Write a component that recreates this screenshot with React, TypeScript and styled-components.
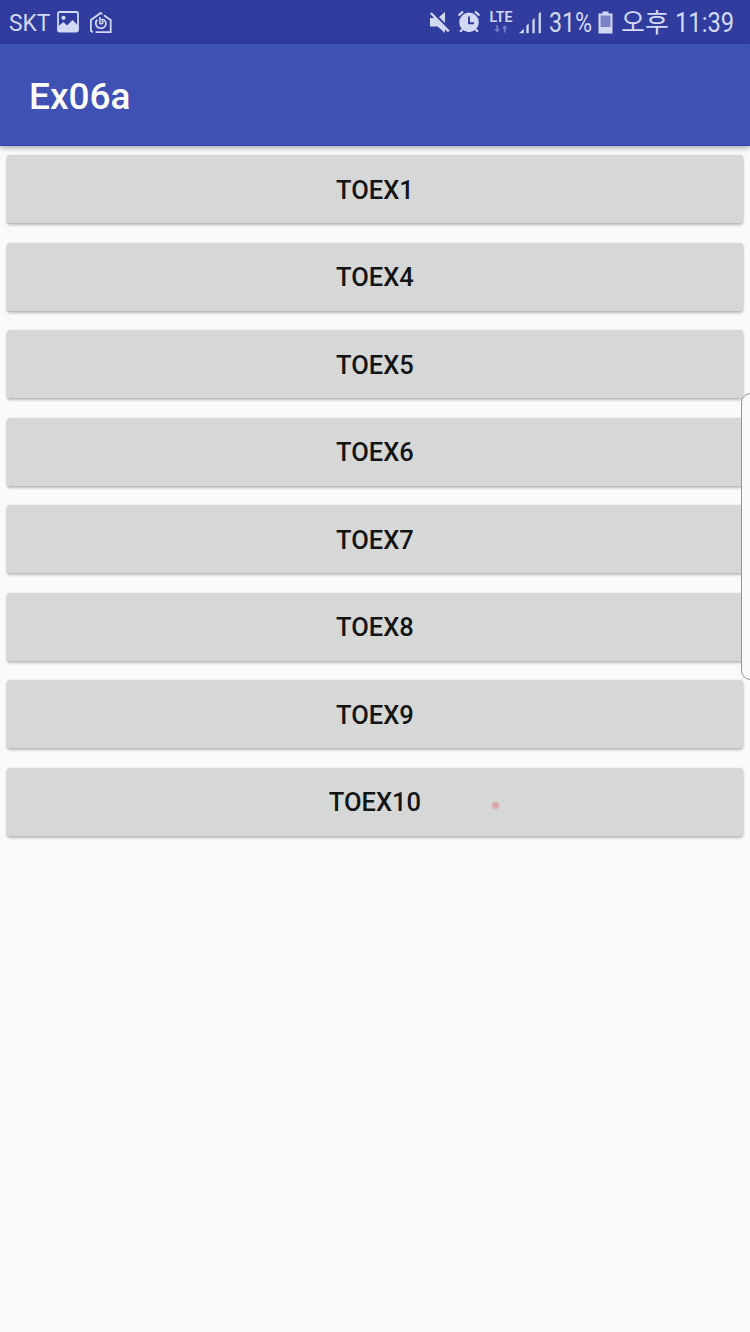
import React from 'react';
import styled, { createGlobalStyle } from 'styled-components';

const GlobalStyle = createGlobalStyle`
  * { box-sizing: border-box; }
  body {
    margin: 0;
    background: #fafafa;
    font-family: Roboto, "Noto Sans CJK KR", sans-serif;
  }
`;

const Screen = styled.div`
  position: relative;
  display: flex;
  flex-direction: column;
  width: 750px;
  height: 1332px;
  overflow: hidden;
  background: #fafafa;
`;

const StatusBar = styled.header`
  display: flex;
  justify-content: space-between;
  height: 44px;
  padding: 0 15px 0 9px;
  background: #303d9e;
  color: #d3d8f5;
`;

const StatusGroup = styled.div`
  display: flex;
  align-items: center;
  height: 44px;
`;

const Slot = styled.div<{ $w: number; $gap?: number }>`
  display: flex;
  flex: none;
  width: ${(p) => p.$w}px;
  margin-left: ${(p) => p.$gap ?? 0}px;

  svg { display: block; }
`;

const StatusText = styled.span<{ $scale?: number; $size?: number; $weight?: number }>`
  font-size: ${(p) => p.$size ?? 27}px;
  font-weight: ${(p) => p.$weight ?? 400};
  line-height: 44px;
  padding-top: 2px;
  white-space: nowrap;
  transform: scaleX(${(p) => p.$scale ?? 1});
  transform-origin: left center;
`;

const AppBar = styled.div`
  position: relative;
  display: flex;
  align-items: center;
  flex: none;
  height: 102px;
  padding: 4px 29px 0;
  background: #3f51b5;
  border-bottom: 1px solid #3444a2;
  box-shadow: 0 2px 5px rgba(0, 0, 0, 0.32);
`;

const Title = styled.h1`
  margin: 0;
  color: #fff;
  font-size: 37px;
  font-weight: 500;
  line-height: 44px;
`;

const ButtonList = styled.main`
  display: flex;
  flex-direction: column;
  gap: 19.5px;
  padding: 9px 7px 0;
`;

const RaisedButton = styled.button`
  height: 68px;
  padding: 1px 0 0;
  border: 0;
  border-radius: 3px;
  background: #d6d8d7;
  box-shadow: 0 2px 3px rgba(0, 0, 0, 0.26), 0 0 2px rgba(0, 0, 0, 0.12);
  color: #131514;
  font-family: inherit;
  font-size: 25.5px;
  font-weight: 500;
  line-height: 30px;
`;

const EdgeHandle = styled.div`
  position: absolute;
  top: 393px;
  right: -10px;
  width: 19px;
  height: 287px;
  border: 1px solid #929493;
  border-radius: 11px;
  background: #fafafa;
`;

const TouchDot = styled.div`
  position: absolute;
  top: 801px;
  left: 491px;
  width: 9px;
  height: 9px;
  border-radius: 50%;
  background: radial-gradient(circle, #d39b99 0, #dcb0ae 45%, rgba(222, 185, 183, 0.4) 80%);
`;

const PictureIcon = () => (
  <svg width="22" height="22" viewBox="0 0 22 22" fill="none">
    <rect x="1" y="1" width="20" height="19.5" rx="1.5" stroke="currentColor" strokeWidth="1.8" />
    <circle cx="6.5" cy="6.8" r="2.1" fill="currentColor" />
    <path d="M1 15.5l5.5-4.5 3.5 3.5 5.5-5.5L21 14.5v6H1z" fill="currentColor" />
  </svg>
);

const HomeIcon = () => (
  <svg width="22" height="23" viewBox="0 0 22 23" fill="none" stroke="currentColor" strokeWidth="1.8">
    <path d="M2.8 21.2l-1.9-1.4V8.9l9.8-7 1.6 1.2M13.8 4.3l6.9 4.6v12.3H5.5" />
    <path d="M7.3 8.6c-3.2 3.3-1.2 8.6 3.6 8.6 4.4 0 6.4-4.6 4-7.5-1.2-1.4-2.9-1.4-3.8-.6M9.9 5.9v6.6c2.7 1 3.9-1 2.3-2.8" strokeWidth="1.6" />
  </svg>
);

const MuteIcon = () => (
  <svg width="22" height="23" viewBox="0 0 22 23" fill="currentColor">
    <path d="M1 7h4.5L16 17.5V22l-7.5-6.5H1zM10 6l6-5v11z" />
    <path d="M1.8 2l18 18.3" stroke="currentColor" strokeWidth="2.4" />
  </svg>
);

const AlarmIcon = () => (
  <svg width="24" height="24" viewBox="0 0 24 24">
    <circle cx="12" cy="12.4" r="9.8" fill="currentColor" />
    <path d="M1.5 5.5L6 1.7M18 1.7l4.5 3.8M5.2 19.5l-2 2.3M18.8 19.5l2 2.3" stroke="currentColor" strokeWidth="2.2" />
    <path d="M12 6.5v6.8h5" fill="none" stroke="#303d9e" strokeWidth="1.9" />
  </svg>
);

const NetworkBox = styled.div`
  display: flex;
  flex-direction: column;
  align-items: center;
  gap: 1px;
  width: 24px;
`;

const NetworkLabel = styled.span`
  font-size: 15px;
  font-weight: 600;
  line-height: 13px;
  transform: scaleX(0.95);
`;

const TrafficIcon = () => (
  <svg width="14" height="8" viewBox="0 0 14 8" fill="#6f79c4">
    <path d="M2.2 0h2v4h2L3.2 7.5.2 4h2zM9.8 7.5h2v-4h2l-3-3.5-3 3.5h2z" />
  </svg>
);

const SignalIcon = () => (
  <svg width="23" height="23" viewBox="0 0 23 23" fill="currentColor">
    <path d="M0 22.3l4.8-4.5v4.5zM7.4 14.6l2.3-2v9.7H7.4zM13.4 9l2.3-2v15.3h-2.3zM19.6 2.8l2.3-2v21.5h-2.3z" />
  </svg>
);

const BatteryIcon = () => (
  <svg width="15" height="23" viewBox="0 0 15 23">
    <path d="M4.5.5h6v2h4v20H.5v-20h4z" fill="currentColor" />
    <path d="M2.5 4.5h10V16h-10z" fill="#7a82c5" />
  </svg>
);

const labels = ['TOEX1', 'TOEX4', 'TOEX5', 'TOEX6', 'TOEX7', 'TOEX8', 'TOEX9', 'TOEX10'];

export default function App() {
  return (
    <>
      <GlobalStyle />
      <Screen>
        <StatusBar>
          <StatusGroup>
            <Slot $w={43}><StatusText $size={24.5} $scale={0.93}>SKT</StatusText></Slot>
            <Slot $w={22} $gap={5}><PictureIcon /></Slot>
            <Slot $w={22} $gap={11}><HomeIcon /></Slot>
          </StatusGroup>
          <StatusGroup>
            <Slot $w={22}><MuteIcon /></Slot>
            <Slot $w={24} $gap={6}><AlarmIcon /></Slot>
            <Slot $w={24} $gap={8}>
              <NetworkBox>
                <NetworkLabel>LTE</NetworkLabel>
                <TrafficIcon />
              </NetworkBox>
            </Slot>
            <Slot $w={23} $gap={6}><SignalIcon /></Slot>
            <Slot $w={44} $gap={7}><StatusText $scale={0.86}>31%</StatusText></Slot>
            <Slot $w={15} $gap={5}><BatteryIcon /></Slot>
            <Slot $w={48} $gap={8}><StatusText $size={26}>오후</StatusText></Slot>
            <Slot $w={60} $gap={6}><StatusText $scale={0.88}>11:39</StatusText></Slot>
          </StatusGroup>
        </StatusBar>
        <AppBar>
          <Title>Ex06a</Title>
        </AppBar>
        <ButtonList>
          {labels.map((label) => (
            <RaisedButton key={label}>{label}</RaisedButton>
          ))}
        </ButtonList>
        <EdgeHandle />
        <TouchDot />
      </Screen>
    </>
  );
}
